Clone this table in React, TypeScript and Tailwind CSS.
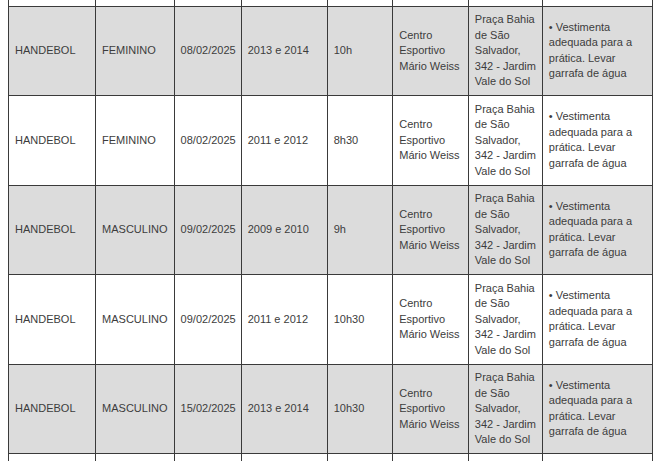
import React from "react";

type Row = {
  esporte: string;
  naipe: string;
  data: string;
  anos: string;
  hora: string;
};

const rows: Row[] = [
  { esporte: "HANDEBOL", naipe: "FEMININO", data: "08/02/2025", anos: "2013 e 2014", hora: "10h" },
  { esporte: "HANDEBOL", naipe: "FEMININO", data: "08/02/2025", anos: "2011 e 2012", hora: "8h30" },
  { esporte: "HANDEBOL", naipe: "MASCULINO", data: "09/02/2025", anos: "2009 e 2010", hora: "9h" },
  { esporte: "HANDEBOL", naipe: "MASCULINO", data: "09/02/2025", anos: "2011 e 2012", hora: "10h30" },
  { esporte: "HANDEBOL", naipe: "MASCULINO", data: "15/02/2025", anos: "2013 e 2014", hora: "10h30" },
];

const td = "border border-[#3a3a3a] pl-[6px] pr-[2px] py-[5.5px] align-middle";

export default function App() {
  return (
    <div className="h-[461px] w-[660px] overflow-hidden bg-white font-['Liberation_Sans',Arial,sans-serif] text-[11px] leading-[15.5px] text-[#3c3c3c]">
      <table className="ml-[8px] w-[645px] table-fixed border-collapse">
        <colgroup>
          <col className="w-[87px]" />
          <col className="w-[78.5px]" />
          <col className="w-[67px]" />
          <col className="w-[86px]" />
          <col className="w-[65.5px]" />
          <col className="w-[75.5px]" />
          <col className="w-[74px]" />
          <col className="w-[110px]" />
        </colgroup>
        <tbody>
          <tr className="h-[6px] bg-white">
            {Array.from({ length: 8 }).map((_, i) => (
              <td key={i} className="border border-t-0 border-[#3a3a3a] p-0"></td>
            ))}
          </tr>
          {rows.map((r, i) => (
            <tr key={i} className={i % 2 === 0 ? "bg-[#dcdcdc]" : "bg-white"}>
              <td className={td}>{r.esporte}</td>
              <td className={td}>{r.naipe}</td>
              <td className={td}>{r.data}</td>
              <td className={td}>{r.anos}</td>
              <td className={td}>{r.hora}</td>
              <td className={td}>Centro Esportivo Mário Weiss</td>
              <td className={td}>Praça Bahia de São Salvador, 342 - Jardim Vale do Sol</td>
              <td className={td}>• Vestimenta adequada para a prática. Levar garrafa de água</td>
            </tr>
          ))}
          <tr className="h-[40px] bg-white">
            {Array.from({ length: 8 }).map((_, i) => (
              <td key={i} className="border border-[#3a3a3a] p-0"></td>
            ))}
          </tr>
        </tbody>
      </table>
    </div>
  );
}
